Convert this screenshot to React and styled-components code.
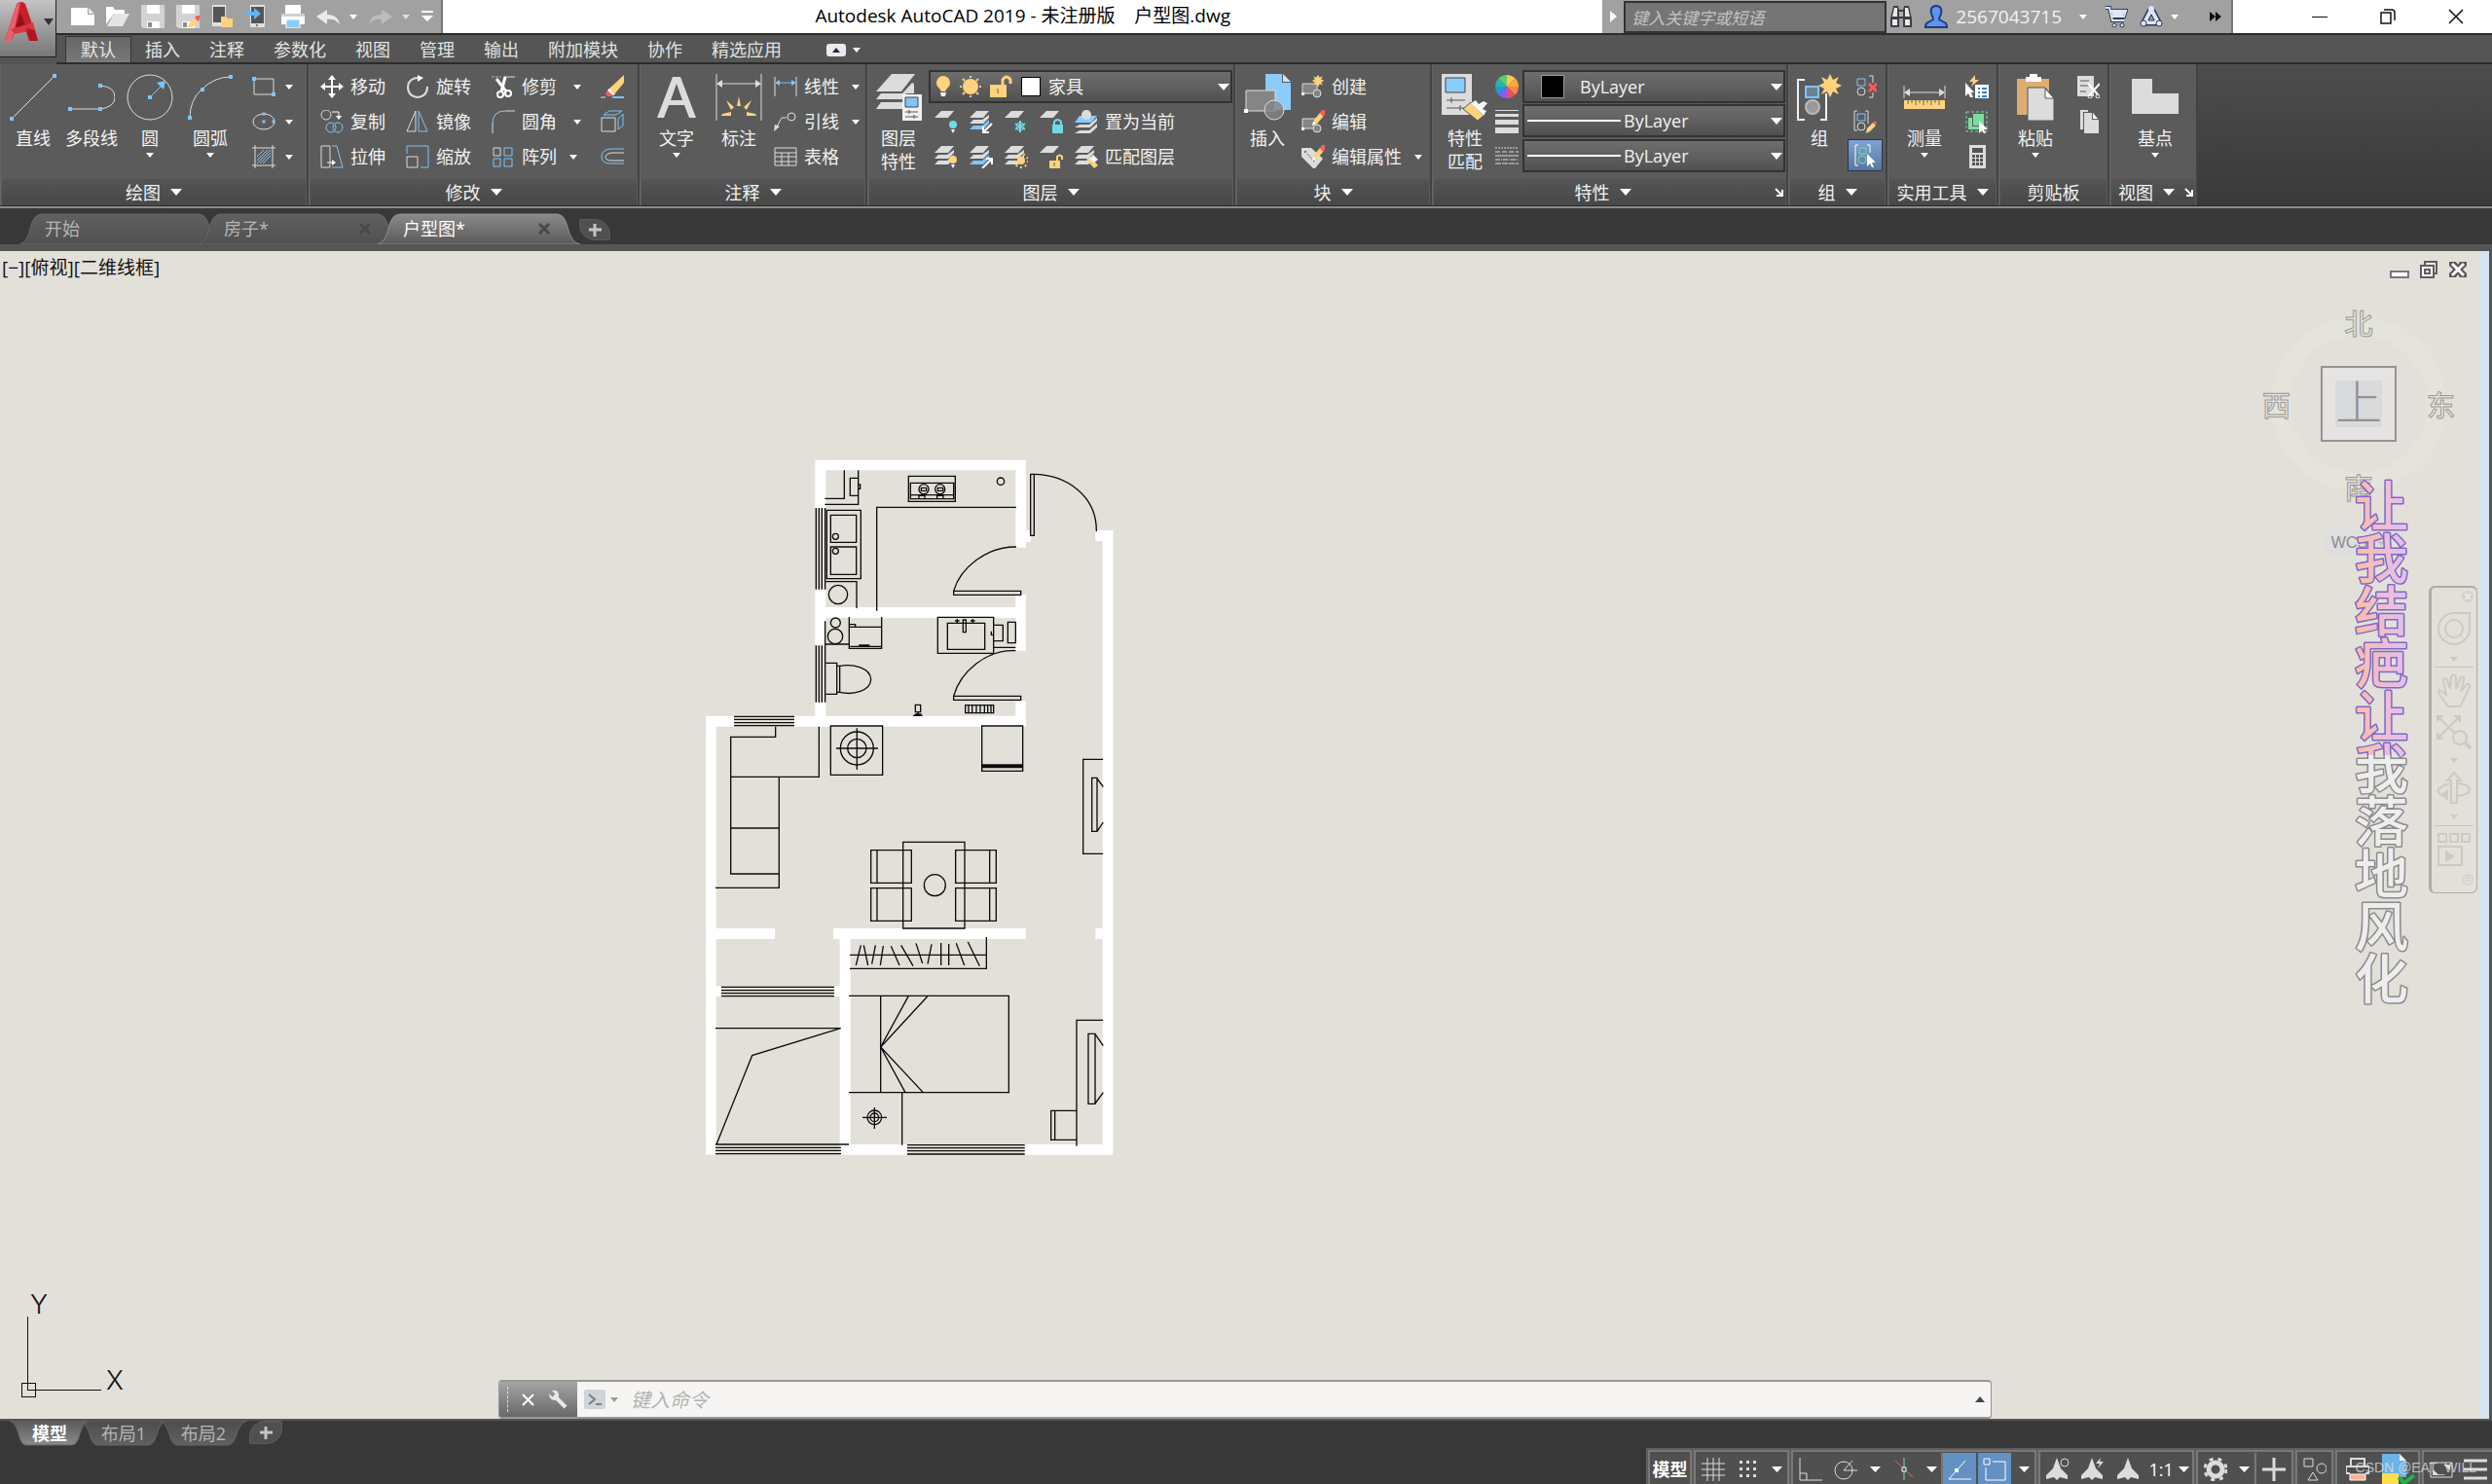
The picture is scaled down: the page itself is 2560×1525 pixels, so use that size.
import React, { useState } from 'react';
import styled, { createGlobalStyle } from 'styled-components';

const light = '#dcdcdc';
const blue = '#7cc6fb';
const sky = '#8accfb';
const yellow = '#ffd27d';
const red = '#ff5a5a';
const teal = '#6fdbe6';
const green = '#7ddc9f';
const panelBg = '#5b5b5b';

/* ---------- icons ---------- */

const Icon = ({ w = 24, h = 24, box, children }) => (
  <svg width={w} height={h} viewBox={box || `0 0 ${w} ${h}`} fill="none" aria-hidden="true">
    {children}
  </svg>
);

const Dots = ({ at, size = 4 }) =>
  at.map(([x, y]) => (
    <rect key={`${x}-${y}`} x={x - size / 2} y={y - size / 2} width={size} height={size} fill={blue} />
  ));

const Caret = ({ w = 8, h = 5, color = '#fff' }) => (
  <svg width={w} height={h} viewBox="0 0 8 5" preserveAspectRatio="none" aria-hidden="true">
    <path d="M0 0H8L4 5Z" fill={color} />
  </svg>
);

const LauncherIcon = () => (
  <Icon w={9} h={9}>
    <path d="M1 1L7 7M8 2V8H2" stroke="#fff" strokeWidth="2" />
  </Icon>
);

const LogoIcon = () => (
  <Icon w={38} h={42}>
    <path d="M2 41L14 3Q19 -1 23 3L36 41H27L24 32H12L9 41Z" fill="#c8202a" />
    <path d="M2 41L14 3L18 2L9 41Z" fill="#e9606a" />
    <path d="M18 12L24 28H13Z" fill="#8e1119" />
    <path d="M8 29L31 22L33 30L12 34Z" fill="#d93742" />
    <path d="M27 41L24 28L33 30L36 41Z" fill="#b3161f" />
  </Icon>
);

const NewIcon = () => (
  <Icon>
    <path d="M0 3H17V10H24V21H0Z" fill="#fff" />
    <path d="M18 3L24 9H18Z" fill="#e9e9e9" />
  </Icon>
);
const OpenIcon = () => (
  <Icon>
    <path d="M0 2H7L9 5H19V9H8L0 20Z" fill="#fff" />
    <path d="M8 9H24L17 22H1Z" fill="#e4e4e4" />
  </Icon>
);
const SaveIcon = ({ pencil }) => (
  <Icon>
    <path d="M0 0H24V24H2L0 22Z" fill="#d3d3d3" />
    <path d="M6 0H19V9H6Z" fill="#fff" />
    <path d="M6 17H19V24H6Z" fill="#fff" />
    <path d="M7 18H11V23H7Z" fill="#8c8c8c" />
    {pencil && (
      <>
        <path d="M12 23L14 18L20 13L23 16L17 23Z" fill={yellow} />
        <path d="M19 13L21 11H24V15L22 17Z" fill={red} />
      </>
    )}
  </Icon>
);
const MobileOpenIcon = () => (
  <Icon>
    <path d="M1 0H15V22H1Z" fill="#e0e0e0" />
    <path d="M2 2H14V18H2Z" fill="#555" />
    <path d="M10 12H15L17 14H22V23H10Z" fill={yellow} />
  </Icon>
);
const MobileSaveIcon = () => (
  <Icon>
    <path d="M4 0H19V23H4Z" fill="#e0e0e0" />
    <path d="M5 2H18V19H5Z" fill="#555" />
    <path d="M0 7H8V3L15 9L8 15V11H0Z" fill="#5fb6f5" />
    <circle cx="11" cy="21" r="1" fill="#555" />
  </Icon>
);
const PrinterIcon = () => (
  <Icon>
    <path d="M4 0H20V9H4Z" fill="#fff" />
    <path d="M0 10H24V20H0Z" fill="#fff" />
    <path d="M0 9H24V12H0Z" fill="#d0d0d0" />
    <path d="M5 15H19V24H5Z" fill={sky} stroke="#fff" />
  </Icon>
);
const UndoIcon = ({ flip }) => (
  <Icon>
    <path
      d={flip ? 'M24 12L13 5V10C5 10 1 14 0 20C4 15 8 14 13 15V20Z' : 'M0 12L11 5V10C19 10 23 14 24 20C20 15 16 14 11 15V20Z'}
      fill={flip ? '#bdbdbd' : '#e9e9e9'}
    />
  </Icon>
);
const CustomizeIcon = () => (
  <Icon w={12} h={12}>
    <path d="M0 0H12V2H0ZM0 5H12L6 11Z" fill="#fff" />
  </Icon>
);

const BinocularsIcon = () => (
  <Icon>
    <path d="M4 1H9L10 5H14L15 1H20L23 14V23H14V14H10V23H1V14Z" fill="#3c4044" />
    <path d="M5 3H8V12H3ZM16 3H19L21 12H16ZM3 15H8V21H3ZM16 15H21V21H16Z" fill="#e8eaec" />
    <path d="M10 7H14V12H10Z" fill="#aab0b5" />
  </Icon>
);
const UserIcon = () => (
  <Icon>
    <path d="M12 1C17 1 18 5 17 9C16 12 15 13 15 15L22 19Q23 21 23 23H1Q1 21 2 19L9 15C9 13 8 12 7 9C6 5 7 1 12 1Z" fill="#5e93f2" stroke="#223b78" strokeWidth="2" />
  </Icon>
);
const CartIcon = () => (
  <Icon>
    <path d="M1 3H5L8 16H20M6 6H22L20 12H8" stroke="#2b3a66" strokeWidth="4" />
    <path d="M1 3H5L8 16H20M6 6H22L20 12H8" stroke="#dfe6f4" strokeWidth="2" />
    <path d="M7 7H21L19 11H8Z" fill="#dfe6f4" />
    <circle cx="10" cy="21" r="2" fill="#dfe6f4" stroke="#2b3a66" />
    <circle cx="18" cy="21" r="2" fill="#dfe6f4" stroke="#2b3a66" />
  </Icon>
);
const ExchangeIcon = () => (
  <Icon>
    <path d="M12 5L5 18H19Z" stroke="#2b3a66" strokeWidth="7" strokeLinejoin="round" />
    <path d="M12 5L5 18H19Z" stroke="#dfe6f4" strokeWidth="4" strokeLinejoin="round" />
    <path d="M12 10L9 16H15Z" fill="#a1a1a1" stroke="#2b3a66" />
    <circle cx="12" cy="4" r="3" fill="#dfe6f4" />
    <circle cx="4" cy="19" r="3" fill="#dfe6f4" stroke="#2b3a66" />
    <circle cx="20" cy="19" r="3" fill="#dfe6f4" stroke="#2b3a66" />
  </Icon>
);

const LineIcon = () => (
  <Icon w={48} h={48}>
    <path d="M2 46L46 2" stroke={light} />
    <Dots at={[[2, 46], [46, 2]]} />
  </Icon>
);
const PolylineIcon = () => (
  <Icon w={48} h={48}>
    <path d="M2 36H33Q48 34 48 24Q48 13 33 12" stroke={light} />
    <Dots at={[[2, 36], [33, 36], [33, 12]]} />
  </Icon>
);
const CircleIcon = () => (
  <Icon w={48} h={48}>
    <circle cx="24" cy="24" r="23" stroke={light} />
    <path d="M24 24L36 12" stroke={blue} />
    <path d="M40 7L38 16L31 9Z" fill={blue} />
    <Dots at={[[24, 24]]} />
  </Icon>
);
const ArcIcon = () => (
  <Icon w={48} h={48}>
    <path d="M3 45Q3 27 15 16Q28 3 45 3" stroke={light} />
    <Dots at={[[3, 45], [16, 16], [45, 3]]} />
  </Icon>
);
const RectIcon = () => (
  <Icon>
    <path d="M2 4H22V20H2Z" stroke={light} />
    <Dots at={[[2, 4], [22, 20]]} />
  </Icon>
);
const EllipseIcon = () => (
  <Icon>
    <ellipse cx="12" cy="12" rx="11" ry="8" stroke={light} />
    <Dots at={[[12, 12], [12, 4], [22, 12]]} size={3} />
  </Icon>
);
const HatchIcon = () => (
  <Icon>
    <path d="M3 0V24M21 0V24M0 3H24M0 21H24" stroke={light} />
    <path d="M5 12L12 5M5 19L19 5M11 19L19 11M5 16L16 5M8 19L19 8" stroke={blue} />
  </Icon>
);
const MoveIcon = () => (
  <Icon>
    <path d="M12 0L16 5H13V11H19V8L24 12L19 16V13H13V19H16L12 24L8 19H11V13H5V16L0 12L5 8V11H11V5H8Z" fill="#fff" />
  </Icon>
);
const RotateIcon = () => (
  <Icon>
    <path d="M13 3Q3 3 2 12Q2 22 12 23Q22 22 22 12" stroke={light} strokeWidth="2" />
    <path d="M12 0L18 3L12 7Z" fill="#fff" />
  </Icon>
);
const TrimIcon = () => (
  <Icon>
    <path d="M0 2H10" stroke={blue} strokeDasharray="3 1" />
    <path d="M13 2H24" stroke={light} />
    <path d="M5 4L15 17M14 2L10 17" stroke="#fff" strokeWidth="3" />
    <circle cx="9" cy="20" r="3" stroke="#fff" strokeWidth="2" />
    <circle cx="17" cy="19" r="3" stroke="#fff" strokeWidth="2" />
  </Icon>
);
const EraseIcon = () => (
  <Icon>
    <path d="M24 0V8L14 20L8 15Z" fill={yellow} />
    <path d="M8 15L14 20L11 22Q6 23 5 19Z" fill={red} />
    <path d="M9 14L15 20L13 21L7 16Z" fill="#fff" />
    <path d="M0 23H5" stroke={light} />
    <path d="M12 23H24" stroke={blue} strokeWidth="2" />
  </Icon>
);
const CopyIcon = () => (
  <Icon>
    <circle cx="6" cy="5" r="5" stroke={light} />
    <circle cx="11" cy="18" r="5" stroke={blue} />
    <circle cx="18" cy="18" r="5" stroke={blue} />
    <path d="M12 2H19V6" stroke="#fff" />
    <path d="M16 6H22L19 10Z" fill="#fff" />
  </Icon>
);
const MirrorIcon = () => (
  <Icon>
    <path d="M10 1V22H1Z" stroke={light} />
    <path d="M13 1V22H22Z" stroke={blue} />
  </Icon>
);
const FilletIcon = () => (
  <Icon>
    <path d="M1 24V13" stroke={light} />
    <path d="M1 14Q1 1 14 1" stroke={blue} />
    <path d="M14 1H24" stroke={light} />
  </Icon>
);
const ExplodeIcon = () => (
  <Icon>
    <path d="M1 8H15V22H1Z" stroke={light} />
    <path d="M3 5L9 1H22L16 5ZM18 9L23 4V16L18 20Z" stroke={blue} />
  </Icon>
);
const StretchIcon = () => (
  <Icon>
    <path d="M1 1H10V23H1Z" stroke={light} />
    <path d="M12 1H17L23 23H12" stroke={blue} />
    <path d="M7 18H14" stroke="#fff" />
    <path d="M12 15L16 18L12 21Z" fill="#fff" />
  </Icon>
);
const ScaleIcon = () => (
  <Icon>
    <path d="M1 9V1H23V23H15" stroke={blue} />
    <path d="M1 12H12V23H1Z" stroke={light} />
  </Icon>
);
const ArrayIcon = () => (
  <Icon>
    <path d="M2 3H9V11H2Z" stroke={light} />
    <path d="M13 3H21V11H13ZM2 14H9V22H2ZM13 14H21V22H13Z" stroke={blue} />
  </Icon>
);
const OffsetIcon = () => (
  <Icon>
    <path d="M24 4H10Q1 5 1 12Q1 19 10 19H24" stroke={blue} />
    <path d="M24 8H11Q5 9 5 12Q5 16 11 16H24" stroke={light} />
  </Icon>
);

const TextIcon = () => (
  <Icon w={48} h={48}>
    <path d="M4 45L20 3H28L44 45H37L32 32H16L11 45ZM18 27H30L24 10Z" fill={light} fillRule="evenodd" />
  </Icon>
);
const DimensionIcon = () => (
  <Icon w={48} h={48}>
    <path d="M1 0V48M47 0V48M4 10H44" stroke={light} />
    <path d="M1 10L7 6V14ZM47 10L41 6V14Z" fill={light} />
    <path d="M24 23L26 33H22ZM11 27L19 34L16 37ZM37 27L29 34L32 37ZM7 41L16 39V43H6ZM41 41L32 39V43H42Z" fill={yellow} />
  </Icon>
);
const LinearIcon = () => (
  <Icon>
    <path d="M1 2V22M23 2V22" stroke={light} />
    <path d="M3 8H21" stroke={blue} />
    <path d="M1 8L6 5V11ZM23 8L18 5V11Z" fill={blue} />
  </Icon>
);
const LeaderIcon = () => (
  <Icon>
    <path d="M2 19L8 8H13" stroke={light} />
    <path d="M0 22L1 15L6 17Z" fill={light} />
    <circle cx="18" cy="7" r="4" stroke={light} />
  </Icon>
);
const TableIcon = () => (
  <Icon>
    <path d="M1 3H23V21H1ZM1 8H23M1 12H23M1 17H23M8 8V21M15 8V21" stroke={light} />
  </Icon>
);

const LayersIcon = () => (
  <Icon w={48} h={48}>
    <path d="M17 0H41L27 18H1Z" fill={light} />
    <path d="M6 20H28L38 9L40 10L28 26H1ZM6 29H28V36H1Z" fill={light} />
    <path d="M28 20L40 10V20H28Z" fill={light} />
    <path d="M28 21H48V48H28Z" fill="#f0f0f0" />
    <path d="M31 24H44V34H31Z" fill={blue} stroke="#444" />
    <path d="M31 39H44M31 44H44M35 37V41M40 42V46" stroke="#555" />
  </Icon>
);

const LayerBase = ({ count = 3, accent }) => (
  <>
    <path d="M7 1H20L14 8H0Z" fill={light} />
    {count > 1 && <path d="M4 10H13L20 5V8L14 14H0Z" fill={light} />}
    {count > 1 && <path d="M4 16H13L20 10V14L14 20H0Z" fill={accent || light} />}
  </>
);
const LayerOffIcon = () => (
  <Icon><LayerBase count={1} /><circle cx="19" cy="15" r="4" fill={teal} /><path d="M17 20H21L19 24Z" fill="#fff" /></Icon>
);
const LayerIsolateIcon = () => (
  <Icon><LayerBase accent={blue} /><path d="M23 14L15 22M14 17V23H20" stroke="#fff" strokeWidth="2" /></Icon>
);
const LayerFreezeIcon = () => (
  <Icon><LayerBase count={1} /><path d="M16 11V23M11 14L21 20M21 14L11 20" stroke={teal} strokeWidth="2" /><circle cx="16" cy="17" r="4" stroke={teal} /></Icon>
);
const LayerLockIcon = () => (
  <Icon><LayerBase count={1} /><path d="M13 15H24V24H13Z" fill={teal} /><path d="M15 15V12Q18 8 22 12V15" stroke={teal} strokeWidth="2" /></Icon>
);
const LayerCurrentIcon = () => (
  <Icon><path d="M5 6H23L17 13H0Z" fill={sky} /><path d="M5 15H15L23 8V11L16 18H0ZM5 21H15L23 14V18L16 24H0Z" fill={light} /><circle cx="12" cy="5" r="5" fill={light} /></Icon>
);
const LayerOnIcon = () => (
  <Icon><LayerBase /><circle cx="19" cy="15" r="4" fill={yellow} /><path d="M17 20H21L19 24Z" fill="#fff" /></Icon>
);
const LayerUnisolateIcon = () => (
  <Icon><LayerBase accent={blue} /><path d="M13 24L22 15M17 14H23V20" stroke="#fff" strokeWidth="2" /></Icon>
);
const LayerThawIcon = () => (
  <Icon><LayerBase /><circle cx="17" cy="16" r="4" fill={yellow} /><circle cx="17" cy="16" r="7" stroke={yellow} strokeWidth="2" strokeDasharray="2 3" /></Icon>
);
const LayerUnlockIcon = () => (
  <Icon><LayerBase count={1} /><path d="M10 16H21V24H10Z" fill={yellow} /><path d="M18 16V12Q21 9 23 12V15" stroke={yellow} strokeWidth="2" /><path d="M15 18V22" stroke="#665" /></Icon>
);
const LayerMatchIcon = () => (
  <Icon><LayerBase /><path d="M12 15L16 12L24 21L20 24Z" fill={yellow} /><path d="M15 14L19 10L24 15L20 18Z" fill="#f4f4f4" /></Icon>
);

const BulbIcon = () => (
  <Icon w={16}><ellipse cx="8" cy="8" rx="7" ry="7" fill={yellow} /><path d="M3 12L6 17H10L13 12Z" fill={yellow} /><path d="M5 18H11L10 22H6Z" fill="#fff" /></Icon>
);
const SunIcon = () => (
  <Icon><circle cx="12" cy="12" r="8" fill={yellow} /><path d="M12 1V3M12 21V23M1 12H3M21 12H23M4 4L6 6M20 4L18 6M4 20L6 18M20 20L18 18" stroke={yellow} strokeWidth="2" /></Icon>
);
const OpenLockIcon = () => (
  <Icon><path d="M0 10H17V23H0Z" fill={yellow} /><path d="M13 10V5Q17 -1 21 5V9" stroke={yellow} strokeWidth="3" /><path d="M8 14V19" stroke="#665" /></Icon>
);

const InsertIcon = () => (
  <Icon w={48} h={48}>
    <path d="M22 0H39V9H48V37H22Z" fill={sky} />
    <path d="M40 0L48 8H40Z" fill="#c8e6fd" />
    <path d="M2 17H32V38H2Z" fill="#858585" stroke={light} />
    <circle cx="31" cy="37" r="10" fill="#858585" fillOpacity="0.8" stroke={light} />
    <path d="M0 36H4V40H0Z" fill="#fff" />
  </Icon>
);
const starPath = 'M0 -8L2 -4L6 -6L4 -2L8 0L4 2L6 6L2 4L0 8L-2 4L-6 6L-4 2L-8 0L-4 -2L-6 -6L-2 -4Z';
const Pencil = () => (
  <g>
    <path d="M11 16L13 10L19 3L23 6L17 13Z" fill={yellow} />
    <path d="M19 3L21 0H24V5L22 7Z" fill={red} />
    <path d="M11 16L12 12L15 14Z" fill="#fff" />
  </g>
);
const BlockBase = () => (
  <>
    <path d="M1 9H16V19H1Z" fill="#858585" stroke={light} />
    <circle cx="16" cy="19" r="4" fill="#858585" stroke={light} />
    <path d="M0 18H3V21H0Z" fill="#fff" />
  </>
);
const CreateBlockIcon = () => (
  <Icon><BlockBase /><path d={starPath} transform="translate(17 6) scale(0.8)" fill={yellow} /></Icon>
);
const EditBlockIcon = () => (<Icon><BlockBase /><Pencil /></Icon>);
const EditAttrIcon = () => (
  <Icon><path d="M0 3H10L22 14L14 24H12L0 12Z" fill={light} /><circle cx="4" cy="7" r="1" fill="#555" /><path d="M6 9L14 18" stroke="#555" strokeDasharray="2 1" /><Pencil /></Icon>
);

const MatchPropsIcon = () => (
  <Icon w={48} h={48}>
    <path d="M0 0H31V42H0Z" fill={light} />
    <path d="M4 4H24V19H4Z" fill={sky} stroke="#444" />
    <path d="M5 27H24M5 35H24M10 24V30M19 32V38" stroke="#555" />
    <path d="M22 36L30 29L43 43L37 48Z" fill={yellow} stroke="#555" />
    <path d="M30 30L35 27L38 31L43 28L47 30L42 36L46 38L43 43Z" fill="#f7f7f7" />
  </Icon>
);
const wheel = ['#ffa63f', '#ff8248', '#e9505b', '#8b5cf6', '#2596d9', '#23b8a5', '#5ecb72', '#ffc94d'];
const ColorWheelIcon = () => (
  <Icon>
    {wheel.map((c, i) => {
      const a = (i * Math.PI) / 4 - Math.PI / 4;
      const b = a + Math.PI / 4;
      const p = (t) => `${12 + 12 * Math.cos(t)} ${12 + 12 * Math.sin(t)}`;
      return <path key={c} d={`M12 12L${p(a)}A12 12 0 0 1 ${p(b)}Z`} fill={c} />;
    })}
  </Icon>
);
const LineweightIcon = () => (
  <Icon><path d="M0 0H24V1H0ZM0 4H24V7H0ZM0 10H24V15H0ZM0 18H24V24H0Z" fill={light} /></Icon>
);
const LinetypeIcon = () => (
  <Icon>
    <path d="M0 3H24" stroke={light} strokeDasharray="2 1" />
    <path d="M0 7H24" stroke={light} strokeDasharray="5 2" />
    <path d="M0 11H24" stroke={light} />
    <path d="M0 15H24" stroke={light} strokeDasharray="5 1 1 1" />
    <path d="M0 19H24" stroke={light} strokeDasharray="6 1" />
  </Icon>
);

const GroupIcon = () => (
  <Icon w={48} h={48}>
    <path d="M9 6H2V47H9M25 47H31V20" stroke="#f0f0f0" strokeWidth="2" />
    <path d="M10 13H23V24H10Z" fill="#6e8191" stroke={blue} strokeWidth="2" />
    <circle cx="17" cy="34" r="7" fill="#999" stroke="#bbb" strokeWidth="2" />
    <path d={starPath} transform="translate(35 12) scale(1.5)" fill={yellow} />
  </Icon>
);
const BracketShapes = ({ color = blue, gray = light }) => (
  <>
    <path d="M4 4H12V11H4Z" stroke={color} />
    <circle cx="8" cy="17" r="4" stroke={gray} />
  </>
);
const UngroupIcon = () => (
  <Icon><BracketShapes /><path d="M16 1H20V8M20 18V23H16" stroke={light} /><path d="M16 9L24 17M24 9L16 17" stroke={red} strokeWidth="3" /></Icon>
);
const GroupEditIcon = () => (
  <Icon><path d="M4 1H1V21H4M12 1H15V14" stroke={light} /><BracketShapes /><path d="M13 24L14 19L20 13L23 16L17 22Z" fill={yellow} /><path d="M20 13L22 11L24 13L23 16Z" fill={red} /></Icon>
);
const GroupSelectIcon = () => (
  <Icon><path d="M5 1H2V22H5M14 1H17V9" stroke="#fff" /><path d="M6 4H13V10H6Z" stroke={green} /><circle cx="9" cy="16" r="4" stroke={green} /><path d="M14 10L23 19H19L21 24L19 24L17 20L14 23Z" fill="#fff" /></Icon>
);
const MeasureIcon = () => (
  <Icon w={48} h={48}>
    <path d="M3 12V25M45 12V25M5 19H43" stroke={light} />
    <path d="M3 19L9 15V23ZM45 19L39 15V23Z" fill={light} />
    <path d="M3 27H45V36H3Z" fill={yellow} />
    <path d="M7 27V31M11 27V30M15 27V32M19 27V30M23 27V32M27 27V30M31 27V32M35 27V30M39 27V32" stroke="#665" />
  </Icon>
);
const QuickSelectIcon = () => (
  <Icon><path d="M10 10H24V24H10Z" fill="#fff" /><path d="M13 14H15M17 14H22M13 18H15M17 18H22M13 22H15M17 22H22" stroke="#2b86d9" strokeWidth="2" /><path d="M0 8L9 18H6L8 23L5 23L3 19L0 22Z" fill="#fff" /><path d="M10 0L4 7H8L6 12L14 5H10Z" fill={yellow} /></Icon>
);
const SelectAllIcon = () => (
  <Icon><path d="M1 2H22V22H1Z" stroke={green} strokeDasharray="3 2" /><path d="M3 8H7V17H15V20H3Z" fill={green} /><path d="M8 4H19V16H8Z" fill={green} /><path d="M14 11L23 20H19L21 24L19 24L17 21L14 24Z" fill="#fff" /></Icon>
);
const CalculatorIcon = () => (
  <Icon><path d="M4 0H21V24H4Z" fill={light} /><path d="M7 3H18V8H7ZM7 10H10V13H7ZM11 10H14V13H11ZM15 10H18V13H15ZM7 14H10V17H7ZM11 14H14V17H11ZM15 14H18V17H15ZM7 18H10V21H7ZM11 18H14V21H11ZM15 18H18V21H15Z" fill="#555" /></Icon>
);
const PasteIcon = () => (
  <Icon w={48} h={48}>
    <path d="M5 5H38V42H5Z" fill="#dcae74" />
    <path d="M14 3H18V0H26V3H30V8H14Z" fill="#fff" />
    <path d="M16 14H34L43 25V48H16Z" fill={light} stroke="#555" />
    <path d="M34 15V25H43Z" fill="#fff" stroke="#555" />
  </Icon>
);
const CutIcon = () => (
  <Icon><path d="M1 1H18V22H1Z" fill={light} /><path d="M4 6H13M4 11H13M4 17H10" stroke="#555" /><path d="M12 9L22 20M24 9L14 20" stroke="#fff" strokeWidth="2" /><circle cx="14" cy="22" r="2" stroke="#fff" /><circle cx="22" cy="22" r="2" stroke="#fff" /></Icon>
);
const CopyClipIcon = () => (
  <Icon><path d="M4 0H12V2H7V20H4Z" fill={light} /><path d="M8 3H16V10H23V24H8Z" fill={light} /><path d="M17 3L22 9H17Z" fill="#fff" /></Icon>
);
const BaseViewIcon = () => (
  <Icon w={48} h={48}><path d="M0 5H21V20H48V41H0Z" fill={light} /></Icon>
);

/* ---------- layout ---------- */

const GlobalStyle = createGlobalStyle`
  *, *::before, *::after { box-sizing: border-box; }
  body {
    margin: 0;
    background: #383838;
    font-family: 'Open Sans', 'Noto Sans CJK SC', sans-serif;
    font-size: 18px;
    line-height: 24px;
    color: #f2f2f2;
  }
  button, input, select { font: inherit; color: inherit; }
  svg { display: block; flex: none; }
`;

const Window = styled.div`
  display: flex;
  flex-direction: column;
  height: 100vh;
  overflow: hidden;
`;

const Plain = styled.button`
  display: flex;
  align-items: center;
  justify-content: center;
  padding: 0;
  border: none;
  background: none;
  white-space: nowrap;
`;

const Top = styled.header`
  display: grid;
  grid-template-columns: 58px 1fr;
  grid-template-rows: 36px 30px;
  background: #555;
`;

const AppButton = styled(Plain)`
  grid-row: 1 / 3;
  align-self: start;
  height: 59px;
  padding-bottom: 14px;
  gap: 4px;
  background: linear-gradient(#c4c4c4, #777);
  border: solid #222;
  border-width: 0 1px 1px 0;
`;

const TitleBar = styled.div`
  display: flex;
  background: #fff;
  border-bottom: 2px solid #2b2b2b;
`;

const QuickAccess = styled.div`
  display: flex;
  align-items: center;
  gap: 12px;
  padding: 0 8px 0 15px;
  background: #a1a1a1;
  border-right: 2px solid #777;
`;

const HistoryTools = styled.div`
  display: flex;
  align-items: center;
  gap: 10px;
`;

const WindowTitle = styled.h1`
  flex: 1;
  margin: 0;
  font-size: 19px;
  font-weight: 400;
  line-height: 32px;
  text-align: center;
  white-space: pre;
  color: #000;
`;

const InfoCenter = styled.form`
  display: flex;
  align-items: center;
  padding-right: 10px;
  background: #a1a1a1;
  border-right: 2px solid #777;
`;

const SearchToggle = styled(Plain)`
  width: 22px;
  height: 32px;
`;

const SearchBox = styled.input`
  width: 270px;
  height: 33px;
  padding: 0 6px;
  border: 2px solid #333;
  border-radius: 0;
  background: #757575;
  font-family: 'Noto Sans CJK SC', sans-serif;
  font-size: 17px;
  font-style: oblique;
  &::placeholder { color: #c2c2c2; opacity: 1; }
`;

const AccountTools = styled.div`
  display: flex;
  align-items: center;
  gap: 12px;
  padding-left: 3px;
`;

const Account = styled(Plain)`
  gap: 8px;
  font-size: 19px;
`;

const ToolPair = styled.div`
  display: flex;
  align-items: center;
  gap: ${(p) => p.$gap}px;
  padding-left: ${(p) => p.$lead || 0}px;
`;

const WindowButtons = styled.div`
  display: flex;
  padding: 0 2px 0 54px;
`;

const WindowButton = styled(Plain)`
  width: 70px;
  height: 34px;
`;

const MenuTabs = styled.nav`
  display: flex;
  align-items: flex-end;
  padding-left: 10px;
  border-bottom: 2px solid #2b2b2b;
`;

const MenuTab = styled(Plain)`
  height: 26px;
  padding: 0 15px;
  color: #e2e2e2;
  background: ${(p) => (p.$active ? 'linear-gradient(#666, #787878)' : 'none')};
  box-shadow: ${(p) => (p.$active ? '0 0 0 1px #333' : 'none')};
`;

const RibbonToggle = styled(Plain)`
  gap: 7px;
  height: 26px;
  padding-left: 31px;
`;

const Ribbon = styled.section`
  display: flex;
  height: 148px;
  background: linear-gradient(#4d4d4d, #393939);
  border-bottom: 2px solid #8a8a8a;
  box-shadow: inset 0 -1px #2b2b2b;
`;

const Panel = styled.section`
  display: flex;
  flex-direction: column;
  width: ${(p) => p.$width}px;
  height: 145px;
  background: ${panelBg};
  border-right: 2px solid #424242;
  border-left: 1px solid #666;
`;

const PanelBody = styled.div`
  display: flex;
  flex: 1;
  padding: 5px 0 0 ${(p) => p.$lead}px;
`;

const PanelTitle = styled.div`
  display: flex;
  align-items: center;
  height: 27px;
  margin: 0 1px;
  background: linear-gradient(#545454, #484848);
`;

const PanelName = styled(Plain)`
  flex: 1;
  gap: 10px;
`;

const Launcher = styled(Plain)`
  width: 14px;
`;

const BigButton = styled.button`
  display: flex;
  flex-direction: column;
  align-items: center;
  width: ${(p) => p.$width}px;
  padding: 5px 0 0;
  border: none;
  background: none;
  white-space: nowrap;
`;

const BigLabel = styled.span`
  display: block;
  width: ${(p) => (p.$stacked ? '36px' : 'auto')};
  margin: 6px 0 3px;
  white-space: ${(p) => (p.$stacked ? 'normal' : 'nowrap')};
`;

const Stack = styled.div`
  display: grid;
  grid-template-rows: repeat(3, 36px);
  grid-template-columns: ${(p) => p.$columns || 'auto'};
  align-content: start;
  margin-left: ${(p) => p.$lead || 0}px;
`;

const SmallButton = styled(Plain)`
  gap: 7px;
  justify-content: flex-start;
  padding-right: ${(p) => p.$trail || 0}px;
  & > svg:last-child:not(:first-child) { margin-left: auto; }
`;

const PressedButton = styled(Plain)`
  width: 36px;
  height: 33px;
  background: linear-gradient(#7fa3d3, #57779f);
  border: 1px solid #28324d;
`;

const LayerColumn = styled.div`
  display: flex;
  flex-direction: column;
  margin-left: 1px;
`;

const LayerRow = styled.div`
  display: flex;
  gap: 12px;
  height: 36px;
  padding-left: 6px;
`;

const Picker = styled.label`
  display: flex;
  align-items: center;
  gap: ${(p) => p.$gap || 8}px;
  width: ${(p) => p.$width}px;
  height: 34px;
  margin: ${(p) => p.$margin || '0 0 2px'};
  padding: 0 1px 0 ${(p) => p.$lead}px;
  background: linear-gradient(#6e6e6e, #515151);
  border: 2px solid #333;
`;

const PickerSelect = styled.select`
  flex: 1;
  min-width: 0;
  padding: 0;
  appearance: none;
  border: none;
  background: none;
  & option { color: #222; }
`;

const Swatch = styled.span`
  width: ${(p) => p.$size}px;
  height: ${(p) => p.$size}px;
  background: ${(p) => p.$color};
  border: ${(p) => p.$border};
`;

const LineSample = styled.span`
  width: 96px;
  height: 2px;
  background: #fff;
`;

const DocTabs = styled.div`
  display: flex;
  align-items: flex-end;
  height: 44px;
  padding-left: 20px;
  background: #383838;
  border-bottom: 7px solid #555;
`;

const DocTabItem = styled.div`
  position: relative;
  z-index: ${(p) => (p.$active ? 1 : 0)};
  display: flex;
  align-items: center;
  justify-content: space-between;
  width: 208px;
  height: 32px;
  margin-right: -24px;
  padding: 0 31px 0 26px;
  color: ${(p) => (p.$active ? '#fff' : '#b5b5b5')};
`;

const TabBackdrop = styled.svg`
  position: absolute;
  inset: 0;
  width: 100%;
  height: 100%;
`;

const TabLabel = styled(Plain)`
  position: relative;
  font-weight: ${(p) => (p.$bold ? 700 : 400)};
`;

const AddDoc = styled(Plain)`
  width: 32px;
  height: 22px;
  margin: 0 0 4px 23px;
  border: 1px solid #5c5c5c;
  border-radius: 2px 16px 2px 16px;
  background: #505050;
`;

const Workspace = styled.main`
  display: flex;
  flex: 1;
  min-height: 0;
  background: #555;
  padding-right: 3px;
`;

const Drawing = styled.div`
  position: relative;
  flex: 1;
  background: #e3e0d9;
  border-right: 10px solid #d7e4f1;
  overflow: hidden;
`;

const ViewLabel = styled.div`
  padding: 5px 2px;
  font-size: 19px;
  color: #111;
`;

const DocButtons = styled.div`
  position: absolute;
  top: 9px;
  right: 12px;
  display: flex;
  gap: 10px;
`;

const PlanHolder = styled.div`
  position: absolute;
  top: 202px;
  left: 700px;
`;

const AxisHolder = styled.div`
  position: absolute;
  left: 0;
  bottom: 0;
`;

const ViewCube = styled.div`
  position: absolute;
  top: 57px;
  right: 24px;
  display: grid;
  grid-template: 31px 138px 31px / 31px 138px 31px;
  place-items: center;
  width: 200px;
  height: 200px;
  background: radial-gradient(circle, transparent 70px, #e4e4db 71px, #e4e4db 89px, transparent 90px);
`;

const Compass = styled(Plain)`
  grid-area: ${(p) => p.$area};
  font-family: 'Noto Sans CJK SC', sans-serif;
  font-size: 29px;
  font-weight: 500;
  color: #e3e0d9;
  -webkit-text-stroke: 1px #9a9995;
`;

const CubeFace = styled.button`
  grid-area: 2 / 2;
  width: 78px;
  height: 78px;
  padding: 0 0 10px;
  border: 2px solid #95938f;
  background: linear-gradient(#d8dadc, #d8dadc) center / 48px 48px no-repeat #e5e4e2;
  font-family: 'Noto Sans CJK SC', serif;
  font-weight: 300;
  font-size: 48px;
  line-height: 60px;
  color: #929292;
`;

const Wcs = styled(Plain)`
  position: absolute;
  top: 287px;
  right: 91px;
  gap: 10px;
  width: 67px;
  height: 26px;
  border-radius: 5px;
  background: #dedee0;
  font-family: 'Liberation Sans', sans-serif;
  font-size: 16px;
  color: #8b8b8b;
`;

const Lyrics = styled.svg`
  position: absolute;
  top: 200px;
  right: 66px;
  font-family: 'Noto Sans CJK SC', sans-serif;
  font-size: 55px;
  font-weight: 500;
`;

const NavBar = styled.div`
  position: absolute;
  top: 344px;
  right: 2px;
  display: flex;
  flex-direction: column;
  align-items: center;
  width: 50px;
  padding: 1px 0 4px;
  border: 1px solid #adaba6;
  border-width: 2px 1px 1px 3px;
  border-radius: 6px;
`;

const NavButton = styled(Plain)`
  width: 40px;
  height: ${(p) => p.$height}px;
  align-self: center;
  justify-content: ${(p) => p.$align || 'center'};
`;

const NavRule = styled.hr`
  width: 40px;
  margin: 2px 0;
  border: none;
  border-top: 1px solid #c6c4be;
`;

const CommandLine = styled.form`
  position: absolute;
  left: 512px;
  right: 501px;
  bottom: 0;
  display: flex;
  height: 40px;
  border: 2px solid #989795;
  border-width: 2px 1px;
  border-radius: 4px;
  background: #f6f5f3;
  overflow: hidden;
`;

const CommandHandle = styled.div`
  display: flex;
  align-items: center;
  gap: 14px;
  width: 80px;
  padding-left: 8px;
  background: linear-gradient(#a5a5a5, #686868);
`;

const Grip = styled.span`
  width: 1px;
  height: 26px;
  border-left: 1px dashed #ddd;
`;

const CommandInput = styled.input`
  flex: 1;
  padding: 0 13px;
  border: none;
  background: none;
  font-family: 'Noto Sans CJK SC', sans-serif;
  font-size: 20px;
  font-style: oblique;
  color: #333;
  &::placeholder { color: #b3b3b3; opacity: 1; }
`;

const CommandPrompt = styled(Plain)`
  gap: 4px;
  padding-left: 6px;
`;

const CommandHistory = styled(Plain)`
  width: 22px;
`;

const LayoutTabs = styled.div`
  display: flex;
  height: 30px;
  padding-left: 10px;
  border-top: 2px solid #555;
`;

const LayoutTabItem = styled.div`
  position: relative;
  z-index: ${(p) => (p.$active ? 1 : 0)};
  display: flex;
  align-items: center;
  justify-content: center;
  width: ${(p) => (p.$active ? 82 : 90)}px;
  height: 26px;
  margin-right: ${(p) => (p.$active ? -10 : -8)}px;
  color: ${(p) => (p.$active ? '#fff' : '#b5b5b5')};
`;

const AddLayout = styled(Plain)`
  width: 34px;
  height: 24px;
  margin-left: 10px;
  border: 1px solid #5c5c5c;
  border-radius: 16px 2px 16px 2px;
  background: #505050;
`;

const StatusBar = styled.footer`
  position: relative;
  display: flex;
  align-self: flex-end;
  gap: 2px;
  height: 37px;
  padding: 2px 0 0 2px;
  background: #5e5e5e;
`;

const StatusGroup = styled.div`
  display: flex;
  padding-top: 1px;
  background: #505050;
  border: 2px solid #787878;
  border-bottom: none;
  &:last-of-type { border-right: none; }
`;

const StatusButton = styled(Plain)`
  width: ${(p) => p.$width || 36}px;
  margin-right: ${(p) => (p.$on ? 2 : 0)}px;
  padding-top: 2px;
  font-weight: ${(p) => (p.$bold ? 700 : 400)};
  color: #fff;
  background: ${(p) => (p.$on ? '#6391c4' : 'none')};
  border-left: ${(p) => (p.$rule ? '2px solid #787878' : 'none')};
`;

const Watermark = styled.span`
  position: absolute;
  right: 16px;
  bottom: 5px;
  font-family: 'Liberation Sans', sans-serif;
  font-size: 14px;
  color: rgba(225, 225, 225, 0.75);
  white-space: nowrap;
`;

/* ---------- small parts ---------- */

const Big = ({ icon, label, width, stacked, menu }) => (
  <BigButton $width={width}>
    {icon}
    <BigLabel $stacked={stacked}>{label}</BigLabel>
    {menu && <Caret />}
  </BigButton>
);

const Small = ({ icon, label, name, menu, trail }) => (
  <SmallButton $trail={trail} aria-label={label ? undefined : name}>
    {icon}
    {label}
    {menu && <Caret />}
  </SmallButton>
);

const RibbonPanel = ({ width, lead = 0, title, menu = true, launcher, children }) => (
  <Panel $width={width}>
    <PanelBody $lead={lead}>{children}</PanelBody>
    <PanelTitle>
      <PanelName>
        {title}
        {menu && <Caret w={12} h={7} />}
      </PanelName>
      {launcher && <Launcher aria-label={`${title}设置`}><LauncherIcon /></Launcher>}
    </PanelTitle>
  </Panel>
);

const CloseMark = ({ color }) => (
  <Icon w={12} h={12}>
    <path d="M1 1L11 11M11 1L1 11" stroke={color} strokeWidth="3" />
  </Icon>
);

const PlusMark = () => (
  <Icon w={13} h={13}>
    <path d="M6 0V13M0 6H13" stroke="#c4c4c4" strokeWidth="3" />
  </Icon>
);

const DocTab = ({ label, active, closable, onSelect }) => (
  <DocTabItem $active={active}>
    <TabBackdrop viewBox="0 0 208 32" preserveAspectRatio="none" aria-hidden="true">
      <defs>
        <linearGradient id={active ? 'tabOn' : 'tabOff'} x1="0" y1="0" x2="0" y2="1">
          <stop offset="0" stopColor={active ? '#8a8a8a' : '#606060'} />
          <stop offset="1" stopColor={active ? '#5a5a5a' : '#505050'} />
        </linearGradient>
      </defs>
      <path
        d="M0 32Q8 30 11 16Q14 1 23 1H184Q192 1 195 14Q199 31 208 32Z"
        fill={`url(#${active ? 'tabOn' : 'tabOff'})`}
        stroke={active ? '#8d8d8d' : '#666'}
      />
    </TabBackdrop>
    <TabLabel onClick={onSelect}>{label}</TabLabel>
    {closable && (
      <TabLabel aria-label={`关闭 ${label}`}>
        <CloseMark color="#484848" />
      </TabLabel>
    )}
  </DocTabItem>
);

const LayoutTab = ({ label, active, onSelect }) => (
  <LayoutTabItem $active={active}>
    <TabBackdrop viewBox="0 0 90 26" preserveAspectRatio="none" aria-hidden="true">
      <defs>
        <linearGradient id={active ? 'layoutOn' : 'layoutOff'} x1="0" y1="0" x2="0" y2="1">
          <stop offset="0" stopColor={active ? '#5a5a5a' : '#4d4d4d'} />
          <stop offset="1" stopColor={active ? '#8a8a8a' : '#606060'} />
        </linearGradient>
      </defs>
      <path
        d="M0 0Q7 2 10 14Q13 25 18 25H70Q76 25 79 14Q82 2 90 0Z"
        fill={`url(#${active ? 'layoutOn' : 'layoutOff'})`}
        stroke="#666"
      />
    </TabBackdrop>
    <TabLabel $bold={active} onClick={onSelect}>{label}</TabLabel>
  </LayoutTabItem>
);

/* Flat layout. Three drawing units make one screen pixel. */
const FloorPlan = () => (
  <svg width="480" height="740" viewBox="0 0 1440 2220" fill="none" role="img" aria-label="户型图">
    <path
      fill="#fff"
      d="M412 38H1062V70H412ZM412 38H445V186H412ZM1030 38H1062V308H1030ZM1062 255H1077V290H1062Z
        M412 437H445V610H412ZM412 492H1062V525H412ZM1030 453H1062V626H1030ZM412 785H445V830H412Z
        M1030 780H1062V860H1030ZM75 827H162V860H75ZM348 827H1062V860H348ZM75 827H107V2180H75Z
        M1276 255H1330V288H1276ZM1298 255H1330V2180H1298ZM75 1482H288V1515H75ZM468 1482H1062V1515H468Z
        M1276 1482H1330V1515H1276ZM488 1482H521V2180H488ZM107 1660H123V1692H107ZM471 1660H490V1692H471Z
        M488 2148H696V2180H488ZM1058 2148H1330V2180H1058Z"
    />
    <g stroke="#0c0c0c" strokeWidth="4">
      {/* windows */}
      <path d="M415 186V437M424 186V437M433 186V437M443 186V437M415 610V785M424 610V785M433 610V785M443 535V785" />
      <path d="M162 829H348M162 838H348M162 848H348M162 857H348" />
      <path d="M123 1663H471M123 1673H471M123 1682H471M123 1691H471" />
      <path d="M105 2148H516M105 2158H492M105 2167H492M105 2177H492M696 2150H1058M696 2159H1058M696 2168H1058M696 2178H1058" />
      {/* kitchen */}
      <path d="M502 70V157H442M545 70V175H442M545 94H520V148H545M545 114H551V127H545" />
      <path d="M700 88H844V166H700ZM706 109H839V158H706ZM706 146H839M732 158V148H750V158M788 158V148H807V158M739 124H755V133H739ZM790 124H806V133H790Z" />
      <circle cx="747" cy="128" r="15" />
      <circle cx="797" cy="128" r="15" />
      <circle cx="984" cy="104" r="11" />
      <path d="M1032 184H602V503" />
      <path d="M448 193H553V404H448ZM460 208H539V292H460ZM460 306H539V391H460ZM445 413H540V495" />
      <circle cx="475" cy="274" r="9" />
      <circle cx="475" cy="319" r="9" />
      <circle cx="483" cy="453" r="29" />
      {/* doors */}
      <path d="M1076 82H1087V271H1076ZM839 442H1046V454H839ZM839 766H1046V778H839Z" />
      <path d="M1087 82C1190 84 1280 150 1279 258M839 442C860 370 940 305 1032 306M839 766C860 690 940 622 1030 626" />
      {/* bathroom */}
      <circle cx="475" cy="540" r="15" />
      <circle cx="474" cy="582" r="23" />
      <path d="M443 606H517M517 522V619H617V522M517 553H617M520 613H617M519 545H536V552M547 609H580" />
      <path d="M445 664H479V760H445M479 673H488V754H479M488 673C530 665 583 680 584 715C583 750 530 764 488 754" />
      <path d="M790 523H962V634H790ZM820 541H935V622H820ZM868 531H877V569H868ZM843 534H857M850 528V540M891 534H905M898 528V540" />
      <path d="M962 547H991V596H962M955 566V577H961M1030 538H1006V602H1030ZM962 616H1030" />
      <path d="M721 793H737V815H721ZM729 815V825M714 826H743M719 822H740" />
      <path d="M875 794H962V818H875ZM885 794V818M896 794V818M909 794V818M921 794V818M934 794V818M944 794V818M954 794V818" />
      {/* living room */}
      <path d="M290 860V892H152V1314H300M424 860V1015H152M301 1015V1357H105M152 1173H300" />
      <path d="M460 858H620V1009H460ZM541 865V993M477 927H606" />
      <circle cx="541" cy="927" r="51" />
      <circle cx="541" cy="927" r="29" />
      <path d="M926 858H1052V997H926Z" />
      <path d="M926 982H1052" strokeWidth="12" />
      <path d="M1299 961H1238V1252H1299M1265 1018H1281V1183H1265ZM1281 1020L1300 1046M1281 1183L1300 1155" />
      {/* dining table */}
      <path d="M683 1216H873V1482H683Z" />
      <path d="M584 1241H709V1342H584ZM603 1241V1342M584 1358H709V1459H584ZM603 1358V1459M845 1241H970V1342H845ZM950 1241V1342M845 1358H970V1459H845ZM950 1358V1459" />
      <circle cx="781" cy="1349" r="33" />
      {/* bedroom */}
      <path d="M940 1509V1606H519M519 1564H940M800 1527V1596M824 1530V1596" />
      <path d="M553 1534L538 1596M562 1534L575 1596M598 1534L587 1592M622 1536L613 1596M646 1537L672 1596M677 1534L714 1598M723 1528L743 1590M771 1531L759 1592M847 1528L872 1596M883 1524L919 1598" />
      <path d="M516 1690H1009V1988H516M614 1690V1988M680 1988V2150" />
      <path d="M700 1690L614 1848L690 1988M758 1692L614 1848L745 1988" />
      <circle cx="595" cy="2065" r="22" />
      <circle cx="595" cy="2065" r="13" />
      <path d="M558 2065H633M595 2034V2100" />
      <path d="M1299 1765H1218V2153M1254 1807H1275V2023H1254ZM1275 1808L1300 1844M1275 2022L1300 1988M1218 2044H1139V2134H1218M1151 2044V2134" />
      {/* balcony */}
      <path d="M105 1790H491L218 1874L108 2148" />
    </g>
  </svg>
);

const AxisIcon = () => (
  <svg width="140" height="140" viewBox="0 0 140 140" fill="none" fontFamily="Inter, sans-serif" fontWeight="300" fontSize="27">
    <path d="M28 35V110H104M22 103H36V117H22Z" stroke="#111" shapeRendering="crispEdges" />
    <text x="31" y="32" fill="#111">Y</text>
    <text x="109" y="110" fill="#111">X</text>
  </svg>
);

const lyricLine = '让我结疤让我落地风化';

const DesktopLyrics = () => (
  <Lyrics width="68" height="620" viewBox="0 0 68 620" aria-label="桌面歌词">
    <defs>
      <linearGradient id="sung" x1="0" y1="0" x2="1" y2="0">
        <stop offset="0.1" stopColor="#fcbda5" />
        <stop offset="0.9" stopColor="#dfc0f4" />
      </linearGradient>
      <pattern id="lyricFill" patternUnits="userSpaceOnUse" width="68" height="620">
        <rect width="68" height="318" fill="url(#sung)" />
        <rect y="318" width="68" height="302" fill="#ededed" />
      </pattern>
      <pattern id="lyricEdge" patternUnits="userSpaceOnUse" width="68" height="620">
        <rect width="68" height="318" fill="#8068c8" />
        <rect y="318" width="68" height="302" fill="#8c8c8c" />
      </pattern>
    </defs>
    <text fill="url(#lyricFill)" stroke="url(#lyricEdge)" strokeWidth="3" strokeLinejoin="round" paintOrder="stroke">
      {[...lyricLine].map((char, i) => (
        <tspan key={i} x="6" y={82 + i * 54}>{char}</tspan>
      ))}
    </text>
  </Lyrics>
);

const faint = '#cccac4';

const NavigationBar = () => (
  <NavBar>
    <NavButton $height={16} $align="flex-end" aria-label="关闭导航栏">
      <Icon w={12} h={12}>
        <circle cx="6" cy="6" r="6" fill="#d3d1cb" />
        <path d="M3 3L9 9M9 3L3 9" stroke="#eceae5" strokeWidth="2" />
      </Icon>
    </NavButton>
    <NavButton $height={50} aria-label="导航控制盘">
      <Icon w={36} h={36}>
        <path d="M18 2H34V18A16 16 0 1 1 18 2Z" stroke={faint} strokeWidth="2" />
        <circle cx="18" cy="18" r="9" stroke={faint} strokeWidth="2" />
        <path d="M11 25L7 29M25 25L29 29" stroke={faint} />
      </Icon>
    </NavButton>
    <NavButton $height={12} aria-label="控制盘选项"><Caret color={faint} /></NavButton>
    <NavRule />
    <NavButton $height={44} aria-label="平移">
      <Icon w={36} h={36}>
        <path d="M12 34L2 20Q1 16 5 18L10 22L7 7Q8 3 11 7L14 16L15 4Q18 -1 20 4V16L25 4Q29 2 28 7L25 19L31 11Q35 10 34 14L27 29L24 34Z" stroke={faint} strokeWidth="2" />
      </Icon>
    </NavButton>
    <NavButton $height={42} aria-label="范围缩放">
      <Icon w={36} h={36}>
        <path d="M3 3L22 22M22 3L3 22" stroke={faint} strokeWidth="2" />
        <path d="M0 0H8L0 8ZM25 0V8L17 0ZM0 25V17L8 25Z" fill={faint} />
        <circle cx="24" cy="23" r="7" fill="#e3e0d9" stroke={faint} strokeWidth="2" />
        <path d="M29 28L35 34" stroke={faint} strokeWidth="4" />
      </Icon>
    </NavButton>
    <NavButton $height={14} aria-label="缩放选项"><Caret color={faint} /></NavButton>
    <NavButton $height={44} aria-label="动态观察">
      <Icon w={36} h={36}>
        <path d="M10 27Q0 24 2 19Q8 13 18 13Q33 13 34 19Q34 25 20 26" stroke={faint} strokeWidth="2" />
        <path d="M15 33V10H11L18 2L25 10H21V33Z" fill="#e3e0d9" stroke={faint} strokeWidth="2" />
        <path d="M4 25L12 19V31Z" fill={faint} />
      </Icon>
    </NavButton>
    <NavButton $height={14} aria-label="动态观察选项"><Caret color={faint} /></NavButton>
    <NavRule />
    <NavButton $height={44} aria-label="ShowMotion">
      <Icon w={36} h={36}>
        <path d="M2 2H10V10H2ZM14 2H22V10H14ZM26 2H34V10H26ZM2 15H26V34H2Z" stroke={faint} strokeWidth="2" />
        <path d="M9 19L19 25L9 31Z" fill={faint} />
      </Icon>
    </NavButton>
    <NavButton $height={18} $align="flex-end" aria-label="自定义">
      <Icon w={12} h={12}>
        <circle cx="6" cy="6" r="5" stroke={faint} />
        <path d="M3 4H9M3 7H9" stroke={faint} />
      </Icon>
    </NavButton>
  </NavBar>
);

const person = 'M11 0L15 11L22 18L22 22L14 20L11 23L8 20L0 22L0 18L7 11Z';

const StatusTray = () => (
  <StatusBar>
    <StatusGroup>
      <StatusButton $width={41} $bold>模型</StatusButton>
    </StatusGroup>
    <StatusGroup>
      <StatusButton aria-label="栅格">
        <Icon><path d="M6 0V24M12 0V24M18 0V24M0 6H24M0 12H24M0 18H24" stroke={light} /></Icon>
      </StatusButton>
      <StatusButton aria-label="捕捉">
        <Icon w={18} h={18}><path d="M0 0H3V3H0ZM7 0H10V3H7ZM14 0H17V3H14ZM0 7H3V10H0ZM7 7H10V10H7ZM14 7H17V10H14ZM0 14H3V17H0ZM7 14H10V17H7ZM14 14H17V17H14Z" fill={light} /></Icon>
      </StatusButton>
      <StatusButton $width={22} aria-label="捕捉选项"><Caret w={11} h={6} /></StatusButton>
    </StatusGroup>
    <StatusGroup>
      <StatusButton aria-label="正交">
        <Icon><path d="M1 0V23H24M1 16H8V23" stroke={light} /></Icon>
      </StatusButton>
      <StatusButton aria-label="极轴追踪">
        <Icon><circle cx="10" cy="13" r="9" stroke={light} /><path d="M24 13H10L19 3" stroke={light} /></Icon>
      </StatusButton>
      <StatusButton $width={24} aria-label="极轴选项"><Caret w={11} h={6} /></StatusButton>
      <StatusButton aria-label="等轴测草图">
        <Icon><path d="M3 3L21 20" stroke="#e0676e" /><path d="M12 0V23" stroke={green} /><path d="M10 10H14V14H10Z" fill="#505050" stroke="#fff" /></Icon>
      </StatusButton>
      <StatusButton $width={20} aria-label="等轴测选项"><Caret w={11} h={6} /></StatusButton>
      <StatusButton $on $width={36} $rule aria-label="对象捕捉追踪">
        <Icon><path d="M18 3L1 22H24" stroke="#fff" /><path d="M7 11H11V15H7Z" fill="#fff" /></Icon>
      </StatusButton>
      <StatusButton $on $width={34} aria-label="二维对象捕捉">
        <Icon><path d="M10 4H23V23H3V10M1 1H7V7H1Z" stroke="#fff" /></Icon>
      </StatusButton>
      <StatusButton $width={22} aria-label="捕捉设置"><Caret w={11} h={6} /></StatusButton>
    </StatusGroup>
    <StatusGroup>
      <StatusButton aria-label="注释可见性">
        <Icon><path d={person} fill={light} /><circle cx="19" cy="5" r="4" stroke={light} /></Icon>
      </StatusButton>
      <StatusButton aria-label="自动缩放">
        <Icon><path d={person} fill={light} /><path d="M20 0L15 6H19L17 11L23 4H19Z" fill={light} /></Icon>
      </StatusButton>
      <StatusButton aria-label="注释比例"><Icon w={22}><path d={person} fill={light} /></Icon></StatusButton>
      <StatusButton $width={48} aria-label="1:1 比例">1:1&nbsp;<Caret w={11} h={6} /></StatusButton>
    </StatusGroup>
    <StatusGroup>
      <StatusButton aria-label="切换工作空间">
        <Icon>
          <circle cx="12" cy="12" r="7" stroke={light} strokeWidth="5" />
          <circle cx="12" cy="12" r="11" stroke={light} strokeWidth="3" strokeDasharray="4 5" />
        </Icon>
      </StatusButton>
      <StatusButton $width={22} aria-label="工作空间选项"><Caret w={11} h={6} /></StatusButton>
      <StatusButton $width={38} $rule aria-label="注释监视器">
        <Icon><path d="M12 0V24M0 12H24" stroke={light} strokeWidth="3" /></Icon>
      </StatusButton>
    </StatusGroup>
    <StatusGroup>
      <StatusButton $width={35} aria-label="隔离对象">
        <Icon><path d="M1 1H10V9H1ZM10 15L15 23H5Z" stroke={light} /><circle cx="19" cy="11" r="5" stroke={light} /></Icon>
      </StatusButton>
    </StatusGroup>
    <StatusGroup>
      <StatusButton $width={42} aria-label="打印">
        <Icon><path d="M5 8V1H19V8M4 16H0V9H24V16H20" stroke={light} strokeWidth="2" /><path d="M4 17H20V23H4Z" fill="#ffb08a" stroke="#fff" /></Icon>
      </StatusButton>
      <StatusButton $width={41} aria-label="DWG 检查">
        <Icon w={36} h={32}>
          <path d="M1 0H19V7H26V24H1Z" fill="#6bb3e8" />
          <path d="M19 0L26 7H19Z" fill="#e6f3fc" />
          <path d="M1 20H18V31H1Z" fill="#ffe04a" />
          <path d="M18 24L24 30L34 22" stroke="#22b14c" strokeWidth="4" />
        </Icon>
      </StatusButton>
    </StatusGroup>
    <StatusGroup>
      <StatusButton aria-label="全屏显示">
        <Icon><path d="M1 5H23V20H1Z" stroke={light} /><path d="M14 7H21V13ZM3 12V18H10Z" fill={light} /></Icon>
      </StatusButton>
      <StatusButton $width={34} aria-label="自定义">
        <Icon><path d="M0 3H24M0 12H24M0 21H24" stroke={light} strokeWidth="3" /></Icon>
      </StatusButton>
    </StatusGroup>
    <Watermark>CSDN @EAT_WILL</Watermark>
  </StatusBar>
);

const menus = ['默认', '插入', '注释', '参数化', '视图', '管理', '输出', '附加模块', '协作', '精选应用'];
const documents = ['开始', '房子*', '户型图*'];
const layouts = ['模型', '布局1', '布局2'];

const App = () => {
  const [menu, setMenu] = useState('默认');
  const [doc, setDoc] = useState('户型图*');
  const [layout, setLayout] = useState('模型');

  return (
    <Window>
      <GlobalStyle />
      <Top>
        <AppButton aria-label="应用程序菜单">
          <LogoIcon />
          <Caret w={10} h={7} color="#2d3440" />
        </AppButton>
        <TitleBar>
          <QuickAccess>
            <Plain aria-label="新建"><NewIcon /></Plain>
            <Plain aria-label="打开"><OpenIcon /></Plain>
            <Plain aria-label="保存"><SaveIcon /></Plain>
            <Plain aria-label="另存为"><SaveIcon pencil /></Plain>
            <Plain aria-label="从移动设备打开"><MobileOpenIcon /></Plain>
            <Plain aria-label="保存到移动设备"><MobileSaveIcon /></Plain>
            <Plain aria-label="打印"><PrinterIcon /></Plain>
            <HistoryTools>
              <Plain aria-label="放弃"><UndoIcon /></Plain>
              <Plain aria-label="放弃列表"><Caret /></Plain>
            </HistoryTools>
            <HistoryTools>
              <Plain aria-label="重做"><UndoIcon flip /></Plain>
              <Plain aria-label="重做列表"><Caret color="#ddd" /></Plain>
            </HistoryTools>
            <Plain aria-label="自定义"><CustomizeIcon /></Plain>
          </QuickAccess>
          <WindowTitle>{'Autodesk AutoCAD 2019 - 未注册版    户型图.dwg'}</WindowTitle>
          <InfoCenter onSubmit={(e) => e.preventDefault()}>
            <SearchToggle type="button" aria-label="折叠搜索">
              <Icon w={7} h={12}><path d="M0 0L7 6L0 12Z" fill="#fff" /></Icon>
            </SearchToggle>
            <SearchBox type="text" aria-label="搜索" placeholder="键入关键字或短语" />
            <AccountTools>
              <Plain type="button" aria-label="查找"><BinocularsIcon /></Plain>
              <Account type="button"><UserIcon />2567043715</Account>
              <ToolPair $gap={18} $lead={6}>
                <Caret />
                <CartIcon />
              </ToolPair>
              <ToolPair $gap={8}>
                <ExchangeIcon />
                <Caret />
              </ToolPair>
              <ToolPair $gap={0} $lead={20}>
                <Icon w={12} h={10}><path d="M0 0L6 5L0 10ZM6 0L12 5L6 10Z" fill="#111" /></Icon>
              </ToolPair>
            </AccountTools>
          </InfoCenter>
          <WindowButtons>
            <WindowButton aria-label="最小化">
              <Icon w={16} h={16}><path d="M0 8H16V9H0Z" fill="#111" /></Icon>
            </WindowButton>
            <WindowButton aria-label="还原">
              <Icon w={16} h={16}><path d="M1 4H11V15H1ZM4 1H12Q15 1 15 4V12" stroke="#111" strokeWidth="1.5" /></Icon>
            </WindowButton>
            <WindowButton aria-label="关闭">
              <Icon w={16} h={16}><path d="M1 1L15 15M15 1L1 15" stroke="#111" strokeWidth="1.5" /></Icon>
            </WindowButton>
          </WindowButtons>
        </TitleBar>
        <MenuTabs>
          {menus.map((name) => (
            <MenuTab key={name} $active={name === menu} onClick={() => setMenu(name)}>{name}</MenuTab>
          ))}
          <RibbonToggle aria-label="最小化功能区">
            <Icon w={20} h={13}><rect width="20" height="13" rx="3" fill="#e9ebee" /><path d="M6 9H14L10 4Z" fill="#222a38" /></Icon>
            <Caret />
          </RibbonToggle>
        </MenuTabs>
      </Top>

      <Ribbon>
        <RibbonPanel width={317} lead={3} title="绘图">
          <Big width={60} icon={<LineIcon />} label="直线" />
          <Big width={60} icon={<PolylineIcon />} label="多段线" />
          <Big width={60} icon={<CircleIcon />} label="圆" menu />
          <Big width={64} icon={<ArcIcon />} label="圆弧" menu />
          <Stack $columns="42px" $lead={11}>
            <Small icon={<RectIcon />} name="矩形" menu />
            <Small icon={<EllipseIcon />} name="椭圆" menu />
            <Small icon={<HatchIcon />} name="图案填充" menu />
          </Stack>
        </RibbonPanel>

        <RibbonPanel width={340} lead={11} title="修改">
          <Stack $columns="88px 88px 112px 24px">
            <Small icon={<MoveIcon />} label="移动" />
            <Small icon={<RotateIcon />} label="旋转" />
            <Small icon={<TrimIcon />} label="修剪" menu trail={20} />
            <Small icon={<EraseIcon />} name="删除" />
            <Small icon={<CopyIcon />} label="复制" />
            <Small icon={<MirrorIcon />} label="镜像" />
            <Small icon={<FilletIcon />} label="圆角" menu trail={20} />
            <Small icon={<ExplodeIcon />} name="分解" />
            <Small icon={<StretchIcon />} label="拉伸" />
            <Small icon={<ScaleIcon />} label="缩放" />
            <Small icon={<ArrayIcon />} label="阵列" menu trail={24} />
            <Small icon={<OffsetIcon />} name="偏移" />
          </Stack>
        </RibbonPanel>

        <RibbonPanel width={234} lead={5} title="注释">
          <Big width={64} icon={<TextIcon />} label="文字" menu />
          <Big width={64} icon={<DimensionIcon />} label="标注" />
          <Stack $columns="88px" $lead={4}>
            <Small icon={<LinearIcon />} label="线性" menu />
            <Small icon={<LeaderIcon />} label="引线" menu />
            <Small icon={<TableIcon />} label="表格" />
          </Stack>
        </RibbonPanel>

        <RibbonPanel width={378} lead={1} title="图层">
          <Big width={60} icon={<LayersIcon />} label="图层特性" stacked />
          <LayerColumn>
            <Picker $width={312} $lead={5} $margin="1px 0">
              <BulbIcon />
              <SunIcon />
              <OpenLockIcon />
              <Swatch $size={20} $color="#fff" $border="1px solid #000" />
              <PickerSelect aria-label="图层">
                <option>家具</option>
                <option>墙体</option>
              </PickerSelect>
              <Caret w={12} h={7} />
            </Picker>
            <LayerRow>
              <Small icon={<LayerOffIcon />} name="关" />
              <Small icon={<LayerIsolateIcon />} name="隔离" />
              <Small icon={<LayerFreezeIcon />} name="冻结" />
              <Small icon={<LayerLockIcon />} name="锁定" />
              <Small icon={<LayerCurrentIcon />} label="置为当前" />
            </LayerRow>
            <LayerRow>
              <Small icon={<LayerOnIcon />} name="打开所有图层" />
              <Small icon={<LayerUnisolateIcon />} name="取消隔离" />
              <Small icon={<LayerThawIcon />} name="解冻" />
              <Small icon={<LayerUnlockIcon />} name="解锁" />
              <Small icon={<LayerMatchIcon />} label="匹配图层" />
            </LayerRow>
          </LayerColumn>
        </RibbonPanel>

        <RibbonPanel width={202} lead={2} title="块">
          <Big width={60} icon={<InsertIcon />} label="插入" />
          <Stack $columns="124px" $lead={5}>
            <Small icon={<CreateBlockIcon />} label="创建" />
            <Small icon={<EditBlockIcon />} label="编辑" />
            <Small icon={<EditAttrIcon />} label="编辑属性" menu />
          </Stack>
        </RibbonPanel>

        <RibbonPanel width={366} lead={3} title="特性" launcher>
          <Big width={60} icon={<MatchPropsIcon />} label="特性匹配" stacked />
          <Stack $columns="28px" $lead={1}>
            <Small icon={<ColorWheelIcon />} name="颜色" />
            <Small icon={<LineweightIcon />} name="线宽" />
            <Small icon={<LinetypeIcon />} name="线型" />
          </Stack>
          <Stack $columns="270px">
            <Picker $width={270} $lead={17} $gap={16} $margin="1px 0">
              <Swatch $size={24} $color="#000" $border="1px solid #999" />
              <PickerSelect aria-label="对象颜色"><option>ByLayer</option></PickerSelect>
              <Caret w={12} h={7} />
            </Picker>
            <Picker $width={270} $lead={3} $gap={3}>
              <LineSample />
              <PickerSelect aria-label="线宽"><option>ByLayer</option></PickerSelect>
              <Caret w={12} h={7} />
            </Picker>
            <Picker $width={270} $lead={3} $gap={3}>
              <LineSample />
              <PickerSelect aria-label="线型"><option>ByLayer</option></PickerSelect>
              <Caret w={12} h={7} />
            </Picker>
          </Stack>
        </RibbonPanel>

        <RibbonPanel width={102} lead={2} title="组">
          <Big width={58} icon={<GroupIcon />} label="组" />
          <Stack $columns="36px">
            <Plain aria-label="解除编组"><UngroupIcon /></Plain>
            <Plain aria-label="组编辑"><GroupEditIcon /></Plain>
            <PressedButton aria-label="启用组选择"><GroupSelectIcon /></PressedButton>
          </Stack>
        </RibbonPanel>

        <RibbonPanel width={114} lead={7} title="实用工具">
          <Big width={60} icon={<MeasureIcon />} label="测量" menu />
          <Stack $columns="24px" $lead={12}>
            <Small icon={<QuickSelectIcon />} name="快速选择" />
            <Small icon={<SelectAllIcon />} name="全部选择" />
            <Small icon={<CalculatorIcon />} name="快速计算器" />
          </Stack>
        </RibbonPanel>

        <RibbonPanel width={114} lead={7} title="剪贴板" menu={false}>
          <Big width={60} icon={<PasteIcon />} label="粘贴" menu />
          <Stack $columns="24px" $lead={12}>
            <Small icon={<CutIcon />} name="剪切" />
            <Small icon={<CopyClipIcon />} name="复制" />
          </Stack>
        </RibbonPanel>

        <RibbonPanel width={91} lead={16} title="视图" launcher>
          <Big width={60} icon={<BaseViewIcon />} label="基点" menu />
        </RibbonPanel>
      </Ribbon>

      <DocTabs>
        {documents.map((name, i) => (
          <DocTab key={name} label={name} active={name === doc} closable={i > 0} onSelect={() => setDoc(name)} />
        ))}
        <AddDoc aria-label="新建图形"><PlusMark /></AddDoc>
      </DocTabs>

      <Workspace>
        <Drawing>
          <ViewLabel>[−][俯视][二维线框]</ViewLabel>
          <DocButtons>
            <Plain aria-label="最小化图形">
              <Icon w={20} h={20}><path d="M1 12H19V18H1Z" fill="#fff" stroke="#777" strokeWidth="2" /></Icon>
            </Plain>
            <Plain aria-label="还原图形">
              <Icon w={20} h={20}><path d="M6 2H18V14H6Z" fill="#eee" stroke="#5d5d5d" strokeWidth="2" /><path d="M2 6H15V18H2Z" fill="#fff" stroke="#5d5d5d" strokeWidth="2" /><path d="M6 10H11V14H6Z" stroke="#5d5d5d" strokeWidth="2" /></Icon>
            </Plain>
            <Plain aria-label="关闭图形">
              <Icon w={20} h={20}><path d="M1 2H8L10 5L12 2H19V6L15 10L19 14V18H12L10 15L8 18H1V14L5 10L1 6Z" fill="#5d5555" /><path d="M4 4L16 16M16 4L4 16" stroke="#fff" strokeWidth="3" /></Icon>
            </Plain>
          </DocButtons>
          <PlanHolder><FloorPlan /></PlanHolder>
          <AxisHolder><AxisIcon /></AxisHolder>
          <ViewCube>
            <Compass $area="1 / 2">北</Compass>
            <Compass $area="2 / 1">西</Compass>
            <CubeFace>上</CubeFace>
            <Compass $area="2 / 3">东</Compass>
            <Compass $area="3 / 2">南</Compass>
          </ViewCube>
          <Wcs>WCS<Caret color="#c4c4c4" /></Wcs>
          <NavigationBar />
          <DesktopLyrics />
          <CommandLine onSubmit={(e) => e.preventDefault()}>
            <CommandHandle>
              <Grip />
              <Plain type="button" aria-label="关闭命令行">
                <Icon w={13} h={13}><path d="M1 1L12 12M12 1L1 12" stroke="#fff" strokeWidth="2" /></Icon>
              </Plain>
              <Plain type="button" aria-label="命令行设置">
                <Icon w={20} h={20}><path d="M6 6L18 18" stroke="#e8e8e8" strokeWidth="4" /><path d="M1 4L5 8L8 5L4 1Q10 0 11 5Q11 10 7 11Q1 11 1 4Z" fill="#e8e8e8" /></Icon>
              </Plain>
            </CommandHandle>
            <CommandPrompt type="button" aria-label="最近使用的命令">
              <Icon>
                <rect x="1" y="2" width="22" height="20" rx="2" fill="#cfd4d8" />
                <path d="M6 7L12 12L6 17M13 17H19" stroke="#777f87" strokeWidth="2" />
              </Icon>
              <Caret color="#999" />
            </CommandPrompt>
            <CommandInput type="text" aria-label="命令" placeholder="键入命令" />
            <CommandHistory type="button" aria-label="命令历史">
              <Icon w={10} h={6}><path d="M0 6H10L5 0Z" fill="#444" /></Icon>
            </CommandHistory>
          </CommandLine>
        </Drawing>
      </Workspace>

      <LayoutTabs>
        {layouts.map((name) => (
          <LayoutTab key={name} label={name} active={name === layout} onSelect={() => setLayout(name)} />
        ))}
        <AddLayout aria-label="新建布局"><PlusMark /></AddLayout>
      </LayoutTabs>
      <StatusTray />
    </Window>
  );
};

export default App;
